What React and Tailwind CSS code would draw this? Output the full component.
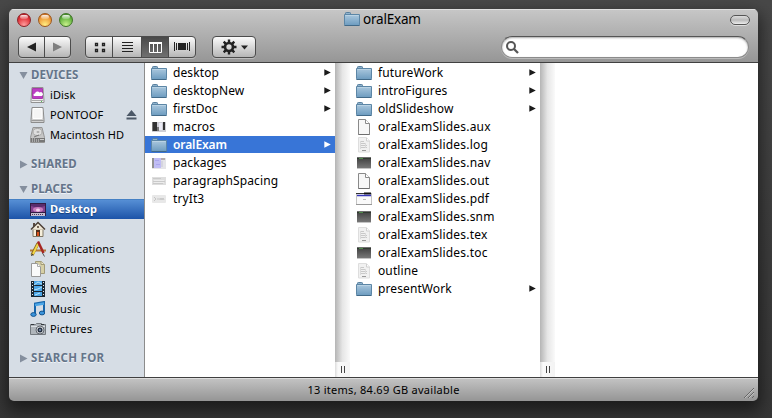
import React from 'react';

function Folder({ className = 'h-[14px] w-4' }) {
  return (
    <svg className={className} viewBox="0 0 16 14">
      <defs>
        <linearGradient id="folder" x1="0" y1="0" x2="0" y2="1">
          <stop offset="0" stopColor="#abc8de" />
          <stop offset="1" stopColor="#6c9bbf" />
        </linearGradient>
      </defs>
      <path d="M1.500 3V1.300q0-.8.8-.8h3.400q.8 0 .8.8V3" fill="#8fb3cd" stroke="#587f9e" />
      <path d="M.5 2.500h15v10.200q0 .8-.8.8H1.300q-.8 0-.8-.8z" fill="url(#folder)" stroke="#5c86a6" />
      <path d="M1.300 3.500h13.400" stroke="#bad3e4" />
      <path d="M.5 13.500h15" stroke="#426a89" />
    </svg>
  );
}

function Page({ lines }) {
  return (
    <svg className="h-4 w-4" viewBox="0 0 16 16">
      {lines ? (
        <>
          <path d="M2.500 .5h8l3 3.500v11h-11z" fill="#f1f1f1" stroke="#dedede" />
          <path d="M10.500 1v3H13.500" fill="#fff" stroke="#cfcfcf" />
          <path d="M5 4.500h3M4.500 6.500h5M5 8.500h6M5 10.500h6" stroke="#c9c9c9" />
          <path d="M4.500 4v8M9.500 6v5" stroke="#dadada" />
          <path d="M6 13.500h4" stroke="#999" />
        </>
      ) : (
        <>
          <path d="M2.500 .5h7l4 4v11h-11z" fill="#f7f7f7" stroke="#8a8a8a" />
          <path d="M9.500 .5v4h4" fill="#fff" stroke="#8a8a8a" />
          <path d="M2.500 15.500h11" stroke="#6e6e6e" />
        </>
      )}
    </svg>
  );
}

function Dark() {
  return (
    <svg className="h-4 w-4" viewBox="0 0 16 16">
      <defs>
        <linearGradient id="dark" x1="0" y1="0" x2="0" y2="1">
          <stop offset="0" stopColor="#3c3c3c" />
          <stop offset="1" stopColor="#777" />
        </linearGradient>
      </defs>
      <rect x="1" y="2" width="14" height="11" fill="url(#dark)" />
      <path d="M1 2.500h14" stroke="#6e6e6e" />
      <path d="M1 3.500h14" stroke="#303830" />
      <path d="M3 3.500h4" stroke="#4f8a4a" />
      <path d="M1 13.500h14" stroke="#c4c4c4" />
    </svg>
  );
}

function Pdf() {
  return (
    <svg className="h-4 w-4" viewBox="0 0 16 16">
      <rect x=".5" y="2.500" width="15" height="11" fill="#fafafa" stroke="#c4c4c4" />
      <path d="M0 2.500h8" stroke="#333" />
      <path d="M8 2.500h7" stroke="#111" strokeWidth="2" />
      <path d="M1 4.500h14" stroke="#3838b8" strokeWidth="1.500" />
      <path d="M7 8.500h3" stroke="#bbb" />
      <path d="M0 13.500h16" stroke="#999" />
    </svg>
  );
}

function Thumb({ kind }) {
  return (
    <svg className="h-4 w-4" viewBox="0 0 16 16">
      {kind === 'macros' && (
        <>
          <rect x="1" y="3" width="14" height="10" fill="#cfcfd6" />
          <path d="M2 3h4v9H2zM12 3h2v8h-2z" fill="#333" />
          <path d="M1 3h1v9H1zM6 8h2v4H6z" fill="#777" />
          <path d="M8 4h3v7H8z" fill="#ececf6" />
        </>
      )}
      {kind === 'packages' && (
        <>
          <rect x="1" y="3" width="14" height="11" fill="#e4e4e8" />
          <path d="M1 3h2v10H1z" fill="#929292" />
          <path d="M3 3h7v10H3z" fill="#c0bdf5" />
          <path d="M10 3h4v2h-4z" fill="#b3acac" />
          <path d="M4 5.500h4M5 9.500h4" stroke="#aba6ee" />
          <path d="M11 6v6" stroke="#c5c5d5" />
        </>
      )}
      {kind === 'spacing' && (
        <>
          <rect x="1" y="4" width="14" height="8" fill="#dedede" />
          <path d="M2 5.500h8M2 8.500h12M2 10.500h10" stroke="#cacaca" />
          <path d="M3 7.500h10M3 9.500h10" stroke="#ededed" />
        </>
      )}
      {kind === 'try' && (
        <>
          <rect x="1" y="4" width="14" height="8" rx="1" fill="#e8e8e8" />
          <path d="M3 6l2 2-2 2M6 8h3M9 9l1-2 1 2 1-2 1 2" fill="none" stroke="#c5c5c5" />
        </>
      )}
    </svg>
  );
}

function Arrow({ selected }) {
  return (
    <svg className="ml-auto mr-[4px] h-[7px] w-[7px]" viewBox="0 0 7 7">
      <path d="M.3 .2 6.800 3.500.3 6.800z" fill={selected ? '#fff' : '#1b1b1b'} />
    </svg>
  );
}

function FileIcon({ kind }) {
  if (kind === 'folder') return <Folder />;
  if (kind === 'page') return <Page />;
  if (kind === 'text') return <Page lines />;
  if (kind === 'dark') return <Dark />;
  if (kind === 'pdf') return <Pdf />;
  return <Thumb kind={kind} />;
}

function FileRow({ name, kind, selected }) {
  const spacing = name.includes('.') ? 'tracking-[0.2px]' : 'tracking-[0.1px]';
  return (
    <div className={`mb-px flex h-[17px] items-center pl-[6px] ${selected ? 'bg-[#3875d7] font-semibold tracking-[-0.1px] text-white' : spacing}`}>
      <span className="flex w-[22px] shrink-0"><FileIcon kind={kind} /></span>
      <span className="whitespace-nowrap">{name}</span>
      {kind === 'folder' && <Arrow selected={selected} />}
    </div>
  );
}

function Column({ items }) {
  return (
    <div className="w-[190px] shrink-0 pt-px">
      {items.map(([name, kind, selected]) => (
        <FileRow key={name} name={name} kind={kind} selected={selected} />
      ))}
    </div>
  );
}

function Divider() {
  return (
    <div className="flex w-[15px] shrink-0 flex-col bg-linear-to-r from-[#b5b5b5] via-[#e6e6e6] to-[#fafafa]">
      <div className="mt-auto flex h-[15px] items-center justify-center gap-[2px] bg-linear-to-r from-[#dcdcdc] via-[#fafafa] via-20% to-[#f3f3f3]">
        <i className="h-[7px] w-px bg-[#444]" />
        <i className="h-[7px] w-px bg-[#444]" />
      </div>
    </div>
  );
}

function PlaceIcon({ kind }) {
  return (
    <svg className="h-4 w-4" viewBox="0 0 16 16">
      {kind === 'idisk' && (
        <>
          <path d="M2 .5h11l1 13v2H1v-2z" fill="#eee" stroke="#929292" />
          <path d="M2.500 1.500h10v10h-10z" fill="#bc3fc4" stroke="#a63aaa" />
          <path d="M4 9a1.500 1.500 0 0 1 1-2.600A2.500 2.500 0 0 1 9.500 5.500 2 2 0 0 1 12 9z" fill="#fff" />
          <path d="M1.500 13.500h12" stroke="#aaa" />
          <path d="M11 14.500h1" stroke="#5b5" />
        </>
      )}
      {kind === 'usb' && (
        <>
          <path d="M2 .5h11l1 12v3H1v-3z" fill="#cfcfcf" stroke="#8c8c8c" />
          <path d="M3 1.500h9v10H3z" fill="#f5f5f5" stroke="#fff" />
          <path d="M1.500 13.500h12" stroke="#999" />
        </>
      )}
      {kind === 'hd' && (
        <>
          <path d="M3 .5h9l2.500 10v5H.5v-5z" fill="#c6c6c6" stroke="#959595" />
          <ellipse cx="7.500" cy="5" rx="4.500" ry="3.500" fill="#dedede" stroke="#a5a5a5" />
          <ellipse cx="8" cy="5" rx="1.500" ry="1" fill="#aaa" />
          <path d="M4 10l5-2" stroke="#777" />
          <path d="M1 11h14v4H1z" fill="#777" />
          <path d="M2.500 11v4M4.500 11v4M6.500 12v3M8.500 12v3" stroke="#aaa" />
          <path d="M10 12.500h4" stroke="#ccc" />
        </>
      )}
      {kind === 'desktop' && (
        <>
          <rect y="1" width="16" height="13" fill="#321b43" />
          <path d="M1 2h14v8H1z" fill="#85418f" />
          <path d="M1 2h14v2L8 6 1 4z" fill="#5a2c6d" />
          <ellipse cx="8" cy="7.500" rx="5" ry="2.500" fill="#c77cbd" />
          <ellipse cx="8" cy="8" rx="2" ry="1.500" fill="#f5d3ec" />
          <path d="M1 11h14v3H1z" fill="#c4bccf" />
          <path d="M2 12.500h12" stroke="#4e375f" strokeDasharray="1 1" />
        </>
      )}
      {kind === 'home' && (
        <>
          <path d="M3 8h10v7.500H3z" fill="#f6efdc" stroke="#817866" />
          <path d="M3 2h2v4H3z" fill="#5a4a40" />
          <path d="M1 8.500 8 1.500l7 7" fill="#eee6d4" stroke="#4c3f37" strokeWidth="1.500" />
          <path d="M6 9h4v6H6z" fill="#51301d" />
          <path d="M7 11h2v4H7z" fill="#d7511c" />
          <circle cx="8" cy="6" r="1" fill="#503b2c" />
        </>
      )}
      {kind === 'apps' && (
        <>
          <path d="M0 9.500h16" stroke="#b67a38" strokeWidth="2" />
          <path d="M8 2.500 2 14" stroke="#8d6c20" strokeWidth="3.200" />
          <path d="M8 3 3 13" stroke="#f3d747" strokeWidth="2" />
          <path d="M8 .5 13.500 12" stroke="#a62622" strokeWidth="2.500" />
          <path d="M12.500 12l2 3.500" stroke="#555" />
          <path d="M2.500 13l-1 2" stroke="#333" />
        </>
      )}
      {kind === 'docs' && (
        <>
          <path d="M5.500 .5h6l3 3v9h-9z" fill="#d6cfa5" stroke="#a19a78" />
          <path d="M11 .5v3h3.500" fill="#eee9ca" stroke="#a19a78" />
          <path d="M1.500 2.500h6l3 3v10h-9z" fill="#fafafa" stroke="#999" />
          <path d="M7.500 2.500v3h3" fill="#fff" stroke="#aaa" />
        </>
      )}
      {kind === 'movies' && (
        <>
          <rect x="1" y="0" width="14" height="16" fill="#1b2732" />
          <path d="M4 0h8v4H4zM4 5h8v5H4zM4 11h8v4H4z" fill="#4ba5e6" />
          <path d="m4 4 4-3 4 2M4 9l4-1 4-2M5 14l5-2" fill="none" stroke="#b5e3fb" />
          <path d="M2.500 1v14M13.500 1v14" stroke="#e4ebf0" strokeDasharray="1 2" />
        </>
      )}
      {kind === 'music' && (
        <>
          <path d="M5 13V2.500L14 1v10.500" fill="none" stroke="#1765ab" strokeWidth="2" />
          <path d="M5 4 14 2.500" stroke="#4ca6e6" strokeWidth="2.500" />
          <ellipse cx="3.500" cy="13.500" rx="2.700" ry="1.900" fill="#3b94dc" stroke="#17568f" />
          <ellipse cx="12" cy="12" rx="2.700" ry="1.900" fill="#3b94dc" stroke="#17568f" />
        </>
      )}
      {kind === 'pictures' && (
        <>
          <path d="M.5 3.500h5l1-1h5l1 1h3v10H.5z" fill="#afb5bb" stroke="#73797f" />
          <path d="M1 5.500h14" stroke="#dce0e4" />
          <path d="M1 3.500h3M11 3.500h3" stroke="#34383d" />
          <circle cx="10" cy="9" r="4" fill="#dadde2" stroke="#62676e" />
          <circle cx="10" cy="9" r="2.500" fill="#26303f" />
          <circle cx="10" cy="9" r="1" fill="#8197bd" />
        </>
      )}
    </svg>
  );
}

function Heading({ label, open }) {
  return (
    <div className="flex h-5 items-center pl-[10px] text-[11.5px] font-bold text-[#65758a] [text-shadow:0_1px_0_#eef2f6]">
      <svg className="mr-[3px] h-[9px] w-[9px]" viewBox="0 0 9 9">
        <path d={open ? 'M.5 1h8L4.500 8z' : 'M1 .5v8L8.500 4.500z'} fill="#858f9e" />
      </svg>
      <span className={label === 'SEARCH FOR' ? 'tracking-[0.3px]' : 'tracking-[0.05px]'}>{label}</span>
    </div>
  );
}

function Place({ name, kind, selected, eject }) {
  return (
    <div className={`flex h-5 items-center pl-[21px] text-[11px] ${selected ? 'border-t border-[#4580c4] bg-linear-to-b from-[#568fd5] to-[#1c53a8] font-bold tracking-[0.25px] text-white [text-shadow:0_1px_1px_#123c7c]' : 'tracking-[0.12px]'}`}>
      <PlaceIcon kind={kind} />
      <span className="ml-1 whitespace-nowrap">{name}</span>
      {eject && (
        <svg className="ml-auto mr-[7px] h-[10px] w-[11px]" viewBox="0 0 11 10">
          <path d="M5.500 0 10.500 6H.5zM.5 7.500h10v2H.5z" fill="#4c5867" />
        </svg>
      )}
    </div>
  );
}

const firstColumn = [
  ['desktop', 'folder'], ['desktopNew', 'folder'], ['firstDoc', 'folder'], ['macros', 'macros'],
  ['oralExam', 'folder', true], ['packages', 'packages'], ['paragraphSpacing', 'spacing'], ['tryIt3', 'try'],
];

const secondColumn = [
  ['futureWork', 'folder'], ['introFigures', 'folder'], ['oldSlideshow', 'folder'],
  ['oralExamSlides.aux', 'page'], ['oralExamSlides.log', 'text'], ['oralExamSlides.nav', 'dark'],
  ['oralExamSlides.out', 'page'], ['oralExamSlides.pdf', 'pdf'], ['oralExamSlides.snm', 'dark'],
  ['oralExamSlides.tex', 'text'], ['oralExamSlides.toc', 'dark'], ['outline', 'text'], ['presentWork', 'folder'],
];

function Toolbar() {
  const group = 'flex h-[22px] overflow-hidden rounded-[4px] border border-[#4c4c4c] bg-linear-to-b from-[#fbfbfb] to-[#b6b6b6] shadow-[0_1px_0_#bcbcbc]';
  const cell = 'flex items-center justify-center border-r border-[#4c4c4c]';
  return (
    <div className="flex h-[22px] pl-[9px] pr-[9px]">
      <div className={`${group} w-[53px]`}>
        <span className={`${cell} w-[26px]`}><svg className="h-[10px] w-[9px]" viewBox="0 0 9 10"><path d="M9 .5v9L0 5z" fill="#222" /></svg></span>
        <span className="flex flex-1 items-center justify-center"><svg className="h-[10px] w-[9px]" viewBox="0 0 9 10"><path d="M0 .5v9L9 5z" fill="#7f7f7f" /></svg></span>
      </div>
      <div className={`${group} ml-[14px] w-[111px]`}>
        <span className={`${cell} w-[27px]`}>
          <svg className="ml-[2px] h-[11px] w-[12px]" viewBox="0 0 12 11"><path d="M1.500 1.500h2v2h-2zM8.500 1.500h2v2h-2zM1.500 7.500h2v2h-2zM8.500 7.500h2v2h-2z" fill="none" stroke="#222" strokeWidth="1.300" /></svg>
        </span>
        <span className={`${cell} w-[29px]`}>
          <svg className="h-[11px] w-[11px]" viewBox="0 0 11 11"><path d="M0 .5h11M0 3.500h11M0 6.500h11M0 9.500h11" stroke="#222" /></svg>
        </span>
        <span className={`${cell} w-[27px] bg-linear-to-b from-[#494949] to-[#707070]`}>
          <svg className="h-[11px] w-[13px]" viewBox="0 0 13 11"><path d="M.5 0v10.500h12V0M4.500 1v9M8.500 1v9" fill="none" stroke="#fff" /><path d="M0 1h13" stroke="#fff" strokeWidth="2" /></svg>
        </span>
        <span className="flex flex-1 items-center justify-center">
          <svg className="h-[10px] w-[16px]" viewBox="0 0 16 10"><rect x="4" y="1" width="8" height="7" fill="#222" /><path d="M.5 0v9M2.500 1v7M13.500 1v7M15.500 0v9" stroke="#222" /></svg>
        </span>
      </div>
      <div className={`${group} ml-4 w-[44px] items-center pl-2`}>
        <svg className="h-4 w-4" viewBox="0 0 16 16">
          <circle cx="8" cy="8" r="4" fill="none" stroke="#222" strokeWidth="2.700" />
          <path d="M8 .5v3.500M8 12v3.500M.5 8H4M12 8h3.500M2.700 2.700l2.600 2.600M10.700 10.700l2.600 2.600M13.300 2.700l-2.600 2.600M5.300 10.700l-2.600 2.600" stroke="#222" strokeWidth="2.400" />
        </svg>
        <svg className="ml-[4px] h-[5px] w-[7px]" viewBox="0 0 7 5"><path d="M0 .5h7L3.500 4.500z" fill="#222" /></svg>
      </div>
      <div className="ml-auto flex h-[22px] w-[248px] items-center rounded-full border border-[#8b8b8b] border-t-[#555] bg-white pl-1 shadow-[inset_0_1px_2px_#aaa,0_1px_0_#bbb]">
        <svg className="h-[13px] w-[13px]" viewBox="0 0 13 13"><circle cx="5" cy="5" r="4" fill="none" stroke="#555" strokeWidth="2" /><path d="m8 8 4 4" stroke="#555" strokeWidth="2.300" /></svg>
      </div>
    </div>
  );
}

function Light({ className }) {
  return (
    <span className={`flex h-[14px] w-[14px] justify-center rounded-full border pt-px ${className}`}>
      <i className="h-1 w-2 rounded-full bg-linear-to-b from-white/90 to-white/20" />
    </span>
  );
}

export default function App() {
  return (
    <div className="h-[418px] w-[772px] overflow-hidden bg-linear-to-b from-[#484848] to-[#363636] pl-[9px] pt-[9px] font-['Noto_Sans','Open_Sans',sans-serif] text-[12px] text-black">
      <div className="flex h-[392px] w-[749px] flex-col overflow-hidden rounded-[5px] shadow-[0_7px_16px_3px_rgba(0,0,0,0.5)]">
        <header className="h-[54px] shrink-0 border-b border-[#404040] bg-linear-to-b from-[#c7c7c7] to-[#969696] shadow-[inset_0_1px_0_#dedede]">
          <div className="flex h-[27px] items-start">
            <div className="flex w-[200px] gap-[7px] pl-2 pt-1">
              <Light className="border-[#8b2328] bg-[radial-gradient(circle_at_50%_90%,#ff9d9d,#e13238_60%,#a71920)]" />
              <Light className="border-[#9b571e] bg-[radial-gradient(circle_at_50%_90%,#ffef83,#ee9b39_60%,#b95b1b)]" />
              <Light className="border-[#3f7428] bg-[radial-gradient(circle_at_50%_90%,#c9f18c,#67b541_60%,#397522)]" />
            </div>
            <div className="flex h-[20px] w-[349px] items-center pl-[135px]">
              <Folder />
              <span className="ml-[3px] text-[13.5px] tracking-[-0.2px]">oralExam</span>
            </div>
            <span className="ml-auto mr-2 mt-[6px] h-[10px] w-5 rounded-[5px] border border-[#555] bg-linear-to-b from-[#ddd] via-[#b9b9b9] to-[#eee] shadow-[0_1px_0_#ddd]" />
          </div>
          <Toolbar />
        </header>
        <main className="flex h-[314px] shrink-0 bg-white">
          <aside className="w-[136px] shrink-0 border-r border-[#8c8c8c] bg-[#d6dde5] pt-[2px]">
            <Heading label="DEVICES" open />
            <Place name="iDisk" kind="idisk" />
            <Place name="PONTOOF" kind="usb" eject />
            <Place name="Macintosh HD" kind="hd" />
            <div className="mt-[9px]"><Heading label="SHARED" /></div>
            <div className="mt-[5px]"><Heading label="PLACES" open /></div>
            <Place name="Desktop" kind="desktop" selected />
            <Place name="david" kind="home" />
            <Place name="Applications" kind="apps" />
            <Place name="Documents" kind="docs" />
            <Place name="Movies" kind="movies" />
            <Place name="Music" kind="music" />
            <Place name="Pictures" kind="pictures" />
            <div className="mt-[9px]"><Heading label="SEARCH FOR" /></div>
          </aside>
          <Column items={firstColumn} />
          <Divider />
          <Column items={secondColumn} />
          <Divider />
        </main>
        <footer className="flex flex-1 items-center border-t border-[#404040] bg-linear-to-b from-[#c4c4c4] to-[#959595] pt-px shadow-[inset_0_1px_0_#dedede]">
          <span className="w-[749px] text-center text-[11px] tracking-[0.28px]">13 items, 84.69 GB available</span>
          <svg className="-ml-[15px] mr-[4px] mt-[4px] h-[11px] w-[11px] shrink-0" viewBox="0 0 11 11">
            <path d="m1 11 10-10M5 11l6-6M9 11l2-2" stroke="#666" />
            <path d="m2 11 9-9M6 11l5-5" stroke="#d0d0d0" strokeWidth=".7" />
          </svg>
        </footer>
      </div>
    </div>
  );
}
